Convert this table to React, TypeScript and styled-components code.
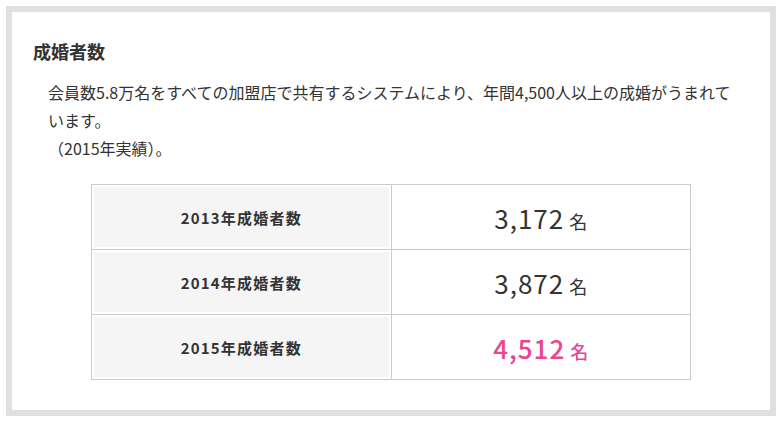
import React from 'react';
import styled, { createGlobalStyle } from 'styled-components';

const GlobalStyle = createGlobalStyle`
  html, body {
    margin: 0;
    padding: 0;
    background: #fff;
  }
  body {
    font-family: "Noto Sans CJK JP", "Noto Sans", sans-serif;
    color: #333;
  }
`;

const Frame = styled.section`
  box-sizing: border-box;
  width: 770px;
  height: 410px;
  margin: 6px;
  border: 6px solid #e0e0e0;
  padding: 26px 21px 0;
`;

const Heading = styled.h2`
  margin: 0;
  font-size: 18px;
  line-height: 26px;
  font-weight: bold;
  color: #333;
`;

const Lead = styled.p`
  margin: 14px 12px 0 15px;
  font-size: 16px;
  line-height: 28px;
  color: #333;
`;

const Table = styled.table`
  width: 600px;
  margin: 22px auto 0;
  border-collapse: collapse;
  table-layout: fixed;
`;

const Row = styled.tr`
  height: 65px;
`;

const Label = styled.th`
  border: 1px solid #ccc;
  background: #f5f5f5;
  box-shadow: inset 0 0 0 2px #fff;
  font-size: 15px;
  font-weight: bold;
  letter-spacing: 1.2px;
  color: #333;
  text-align: center;
  vertical-align: middle;
  padding: 0;
`;

const Value = styled.td<{ $highlight?: boolean }>`
  border: 1px solid #ccc;
  background: #fff;
  text-align: center;
  vertical-align: middle;
  padding: 0;
  color: ${p => (p.$highlight ? '#e8468e' : '#333')};
  font-weight: ${p => (p.$highlight ? 500 : 400)};
`;

const Count = styled.span`
  font-size: 26px;
  letter-spacing: 1px;
`;

const Unit = styled.span`
  font-size: 18px;
  margin-left: 5px;
`;

const rows = [
  { year: 2013, count: '3,172' },
  { year: 2014, count: '3,872' },
  { year: 2015, count: '4,512', highlight: true },
];

const App: React.FC = () => {
  return (
    <>
      <GlobalStyle />
      <Frame>
        <Heading>成婚者数</Heading>
        <Lead>
          会員数5.8万名をすべての加盟店で共有するシステムにより、年間4,500人以上の成婚がうまれています。
          <br />
          （2015年実績）。
        </Lead>
        <Table>
          <tbody>
            {rows.map(r => (
              <Row key={r.year}>
                <Label>{r.year}年成婚者数</Label>
                <Value $highlight={r.highlight}>
                  <Count>{r.count}</Count>
                  <Unit>名</Unit>
                </Value>
              </Row>
            ))}
          </tbody>
        </Table>
      </Frame>
    </>
  );
};

export default App;
